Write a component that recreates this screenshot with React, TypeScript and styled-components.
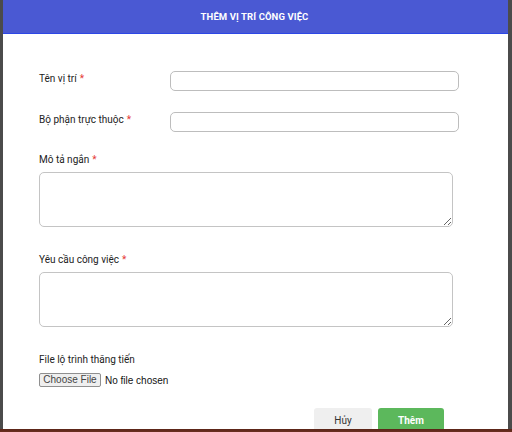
import React from "react";
import styled, { createGlobalStyle } from "styled-components";

const Global = createGlobalStyle`
  html, body { margin: 0; padding: 0; }
  body {
    width: 512px;
    height: 432px;
    overflow: hidden;
    background: linear-gradient(to bottom, #4b4b4b 0, #4b4b4b 429px, #5a2418 429px, #6b3020 432px);
    font-family: Roboto, "Noto Sans", "Liberation Sans", sans-serif;
  }
`;

const Backdrop = styled.div`
  display: flex;
  padding-left: 3px;
  padding-right: 4px;
`;

const Modal = styled.div`
  width: 505px;
  height: 429px;
  background: #fff;
  overflow: hidden;
  display: flex;
  flex-direction: column;
  & > * { flex-shrink: 0; }
`;

const Header = styled.div`
  height: 33px;
  background: #4a59d3;
  border-bottom: 1px solid #2c47e6;
  display: flex;
  align-items: center;
  justify-content: center;
  color: #fff;
  font-size: 9.5px;
  font-weight: 700;
  letter-spacing: 0.1px;
  padding-right: 2px;
`;

const Body = styled.div`
  display: flex;
  flex-direction: column;
  padding: 37px 0 0 36px;
`;

const Row = styled.div<{ $mt?: number }>`
  display: flex;
  align-items: center;
  margin-top: ${(p) => p.$mt ?? 0}px;
`;

const Label = styled.label<{ $w?: number }>`
  display: block;
  ${(p) => (p.$w ? `width: ${p.$w}px;` : "")}
  font-size: 10px;
  line-height: 12px;
  color: #222;
  margin-top: -5px;
`;

const Star = styled.span`
  color: #e53935;
  margin-left: 3px;
`;

const Input = styled.input`
  box-sizing: border-box;
  width: 289px;
  height: 20px;
  border: 1px solid #bdbdbd;
  border-radius: 5px;
  outline: none;
  padding: 0 6px;
  font-family: inherit;
  font-size: 10px;
`;

const Group = styled.div<{ $mt: number }>`
  display: flex;
  flex-direction: column;
  margin-top: ${(p) => p.$mt}px;
`;

const BlockLabel = styled.label<{ $mb: number }>`
  font-size: 10px;
  line-height: 12px;
  color: #222;
  margin-bottom: ${(p) => p.$mb}px;
`;

const TextArea = styled.textarea`
  box-sizing: border-box;
  width: 414px;
  height: 55px;
  border: 1px solid #c4c4c4;
  border-radius: 5px;
  outline: none;
  padding: 4px 6px;
  font-family: inherit;
  font-size: 10px;
  margin: 0;
`;

const FileRow = styled.div`
  display: flex;
  align-items: center;
  gap: 4px;
  font-size: 10px;
  color: #111;
  font-family: "Liberation Sans", Arial, sans-serif;
`;

const FileButton = styled.button`
  box-sizing: border-box;
  width: 62px;
  height: 14px;
  padding: 0;
  background: #efefef;
  border: 1px solid #8f8f8f;
  border-radius: 2px;
  font-family: "Liberation Sans", Arial, sans-serif;
  font-size: 10px;
  color: #444;
  line-height: 12px;
`;

const Footer = styled.div`
  display: flex;
  justify-content: flex-end;
  gap: 6px;
  padding-right: 64px;
  margin-top: 21px;
`;

const Button = styled.button<{ $primary?: boolean }>`
  box-sizing: border-box;
  width: ${(p) => (p.$primary ? 66 : 58)}px;
  height: 26px;
  border: none;
  border-radius: 3px;
  padding: 0 0 2px;
  font-family: Roboto, "Noto Sans", sans-serif;
  font-size: 10px;
  font-weight: ${(p) => (p.$primary ? 700 : 400)};
  color: ${(p) => (p.$primary ? "#fff" : "#333")};
  background: ${(p) => (p.$primary ? "#5cb85c" : "#efefef")};
`;

export default function App() {
  return (
    <>
      <Global />
      <Backdrop>
        <Modal>
          <Header>THÊM VỊ TRÍ CÔNG VIỆC</Header>
          <Body>
            <Row>
              <Label $w={131}>
                Tên vị trí<Star>*</Star>
              </Label>
              <Input />
            </Row>
            <Row $mt={21}>
              <Label $w={131}>
                Bộ phận trực thuộc<Star>*</Star>
              </Label>
              <Input />
            </Row>
            <Group $mt={22}>
              <BlockLabel $mb={6}>
                Mô tả ngắn<Star>*</Star>
              </BlockLabel>
              <TextArea />
            </Group>
            <Group $mt={27}>
              <BlockLabel $mb={6}>
                Yêu cầu công việc<Star>*</Star>
              </BlockLabel>
              <TextArea />
            </Group>
            <Group $mt={27}>
              <BlockLabel $mb={7}>File lộ trình thăng tiến</BlockLabel>
              <FileRow>
                <FileButton>Choose File</FileButton>
                <span>No file chosen</span>
              </FileRow>
            </Group>
          </Body>
          <Footer>
            <Button>Hủy</Button>
            <Button $primary>Thêm</Button>
          </Footer>
        </Modal>
      </Backdrop>
    </>
  );
}
